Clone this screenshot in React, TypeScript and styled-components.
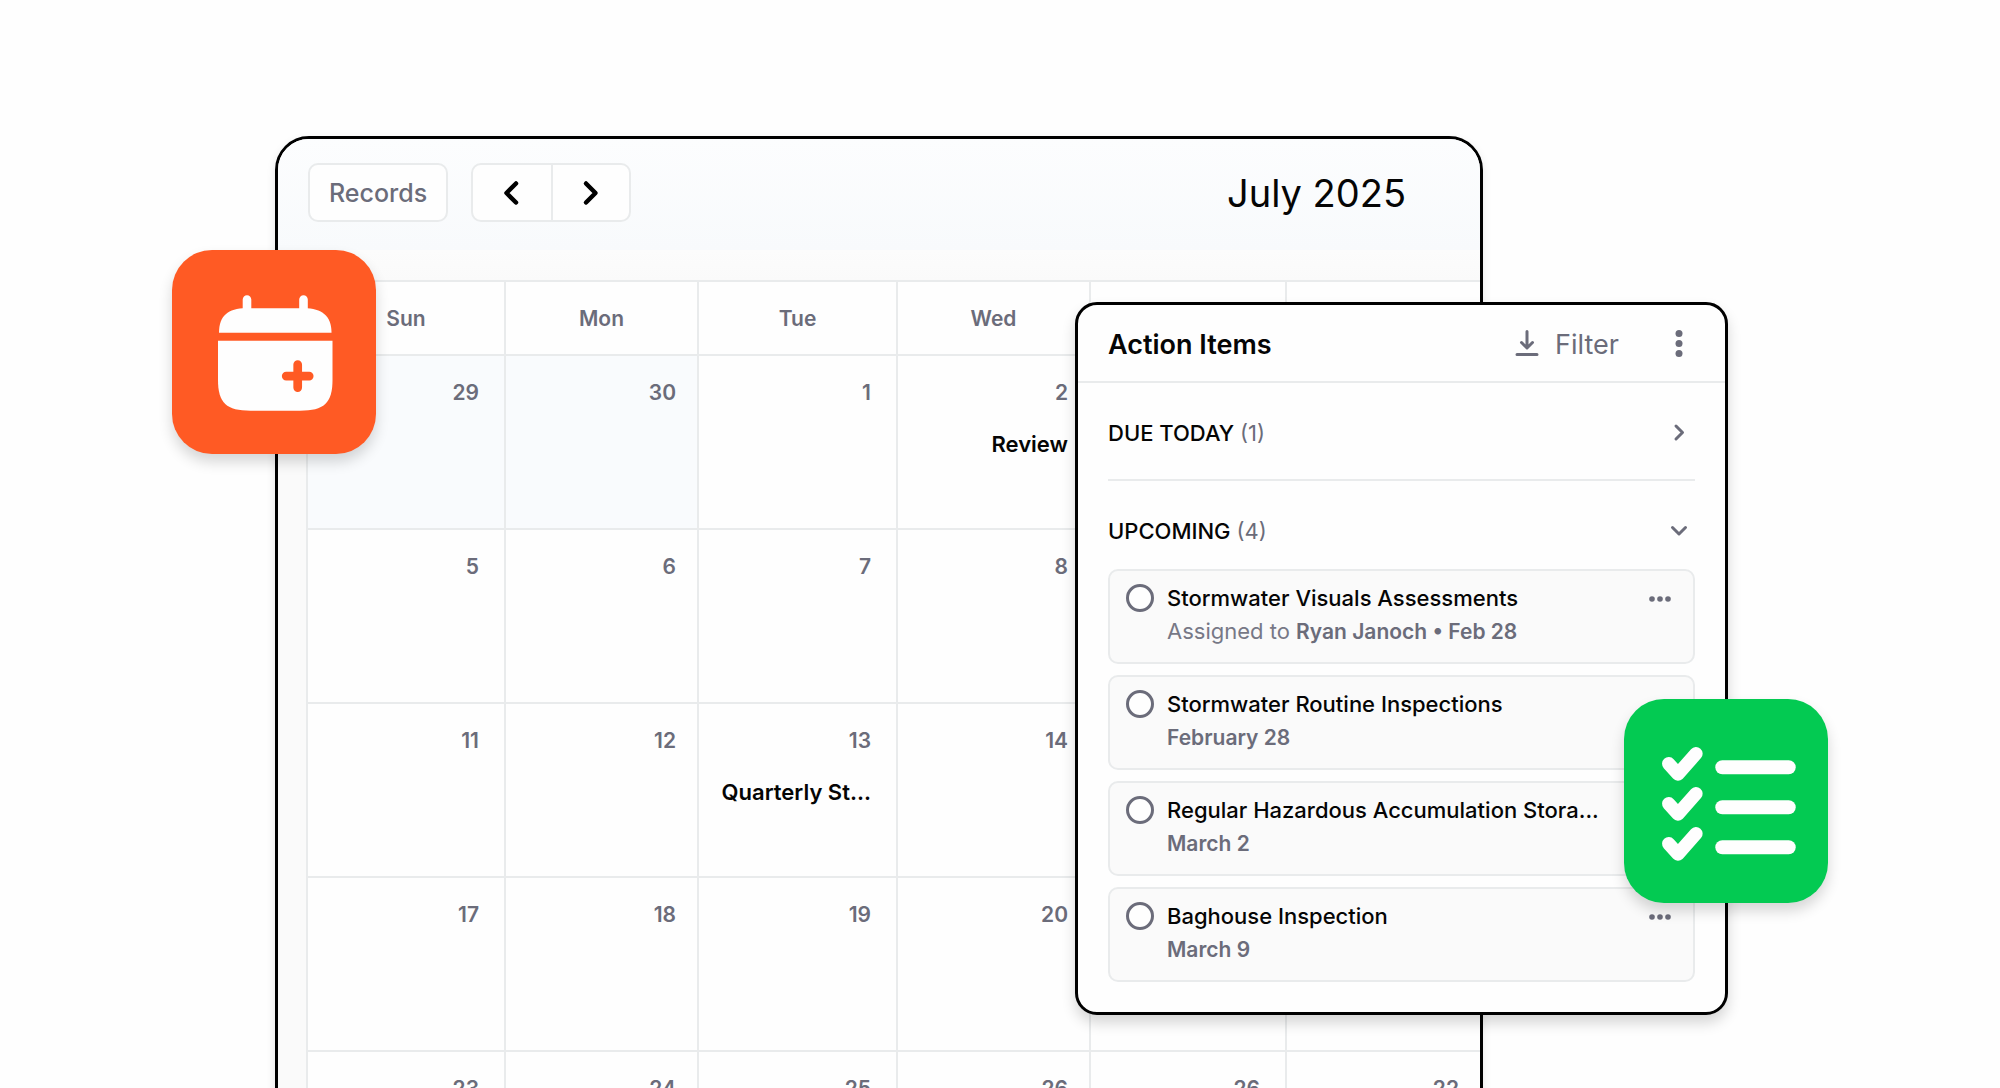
import React from "react";
import styled, { createGlobalStyle } from "styled-components";

const ink = "#050505";
const muted = "#6b6c7a";
const line = "#e9ebec";

const GlobalStyle = createGlobalStyle`
  *, *::before, *::after { box-sizing: border-box; }
  body { margin: 0; background: #fefefe; }
  body, button, input, table { font-family: Inter, "Liberation Sans", sans-serif; }
  h1, h2, h3, p, ul { margin: 0; padding: 0; }
`;

const Stage = styled.main`
  height: 100vh;
  overflow: hidden;
  padding: 136px 172px 0;
  color: ${ink};
`;

const Scene = styled.div`
  position: relative;
  min-width: 1400px;
`;

/* Calendar window */

const CalendarWindow = styled.section`
  margin: 0 345px 0 103px;
  overflow: hidden;
  border: 3px solid #000;
  border-radius: 34px;
  background: #fafafa;
  box-shadow: 0 4px 10px rgba(0, 0, 0, 0.1);
`;

const Toolbar = styled.header`
  display: flex;
  align-items: center;
  gap: 23px;
  padding: 24px 74px 28px 30px;
  background: linear-gradient(#fcfdfe, #f8fafc);
`;

const ToolbarSpacer = styled.div`
  height: 30px;
  background: linear-gradient(#fcfcfc, #fafafa);
`;

const RecordsButton = styled.button`
  height: 59px;
  padding: 0 19px;
  border: 2px solid ${line};
  border-radius: 10px;
  background: #fefefe;
  color: ${muted};
  font-size: 25px;
  font-weight: 500;
`;

const Pager = styled.div`
  display: flex;
  height: 59px;
  border: 2px solid ${line};
  border-radius: 10px;
  background: #fefefe;
`;

const PagerButton = styled.button`
  display: flex;
  align-items: center;
  justify-content: center;
  width: 78px;
  padding: 0;
  border: 0;
  background: none;
  color: #000;
  & + & { border-left: 2px solid ${line}; }
`;

const MonthTitle = styled.h1`
  margin-left: auto;
  font-size: 38px;
  line-height: 48px;
  font-weight: 400;
`;

const GridWrap = styled.div`
  padding-left: 28px;
`;

const MonthTable = styled.table`
  width: 100%;
  table-layout: fixed;
  border-collapse: separate;
  border-spacing: 0;
  background: #fefefe;
`;

const Column = styled.col<{ $width: number }>`
  width: ${(p) => p.$width}px;
`;

const DayName = styled.th`
  height: 74px;
  padding: 0;
  border-top: 2px solid ${line};
  border-left: 2px solid ${line};
  color: ${muted};
  font-size: 21px;
  font-weight: 600;
`;

const DayCell = styled.td<{ $outside: boolean }>`
  height: 174px;
  padding: 23px 25px 0 0;
  border-top: 2px solid ${line};
  border-left: 2px solid ${line};
  background: ${(p) => (p.$outside ? "#f9fbfd" : "#fefefe")};
  color: ${muted};
  font-size: 21px;
  line-height: 28px;
  font-weight: 600;
  text-align: right;
  vertical-align: top;
  white-space: nowrap;
  &:nth-child(even) { padding-right: 21px; }
`;

const EventName = styled.p`
  padding-top: 23px;
  color: ${ink};
  font-size: 22px;
`;

/* Action items panel */

const Panel = styled.section`
  position: absolute;
  top: 166px;
  right: 100px;
  width: 653px;
  border: 3px solid #000;
  border-radius: 22px;
  background: #fefefe;
  box-shadow: 0 8px 14px rgba(0, 0, 0, 0.16);
`;

const PanelHeader = styled.header`
  display: flex;
  align-items: center;
  height: 78px;
  padding: 2px 30px 0;
  border-bottom: 2px solid ${line};
`;

const PanelTitle = styled.h2`
  flex: 1;
  font-size: 27px;
  font-weight: 600;
`;

const PlainButton = styled.button`
  display: flex;
  align-items: center;
  justify-content: center;
  gap: 16px;
  min-width: 32px;
  padding: 0;
  border: 0;
  background: none;
  color: ${muted};
  font-size: 27px;
`;

const FilterButton = styled(PlainButton)`
  margin-right: 44px;
`;

const PanelBody = styled.div`
  padding: 0 30px 30px;
`;

const SectionHeader = styled.div<{ $divided?: boolean }>`
  display: flex;
  align-items: center;
  justify-content: space-between;
  height: ${(p) => (p.$divided ? 98 : 88)}px;
  padding-bottom: ${(p) => (p.$divided ? 0 : 12)}px;
  padding-top: ${(p) => (p.$divided ? 4 : 24)}px;
  border-bottom: ${(p) => (p.$divided ? "2px solid " + line : "0")};
`;

const SectionTitle = styled.h3`
  font-size: 22px;
  line-height: 28px;
  font-weight: 500;
`;

const Count = styled.span`
  color: ${muted};
  font-weight: 400;
`;

const TaskList = styled.ul`
  display: grid;
  gap: 11px;
  list-style: none;
`;

const TaskCard = styled.li`
  display: flex;
  align-items: flex-start;
  gap: 13px;
  height: 95px;
  padding: 11px 16px;
  border: 2px solid ${line};
  border-radius: 10px;
  background: #fafafa;
`;

const TaskCheck = styled.input`
  appearance: none;
  flex: none;
  width: 28px;
  height: 28px;
  margin: 2px 0 0;
  border: 3px solid ${muted};
  border-radius: 50%;
  background: #fefefe;
`;

const TaskText = styled.div`
  flex: 1;
`;

const TaskName = styled.label`
  display: block;
  font-size: 22px;
  line-height: 33px;
  font-weight: 500;
  white-space: nowrap;
`;

const TaskMeta = styled.p`
  color: ${muted};
  font-size: 21px;
  line-height: 33px;
  font-weight: 600;
`;

const TaskMenu = styled(PlainButton)`
  height: 33px;
  min-width: 34px;
`;

/* App tiles */

const Tile = styled.div<{ $color: string; $side: "left" | "right"; $top: number }>`
  position: absolute;
  top: ${(p) => p.$top}px;
  ${(p) => p.$side}: 0;
  width: 204px;
  height: 204px;
  border-radius: 40px;
  background: ${(p) => p.$color};
  box-shadow: 0 8px 14px rgba(0, 0, 0, 0.16);
  svg { display: block; }
`;

const Chevron = ({ d, size, stroke }: { d: string; size: number; stroke: number }) => (
  <svg width={size} height={size} viewBox={`0 0 ${size} ${size}`} fill="none" stroke="currentColor"
    strokeWidth={stroke} strokeLinecap="round" strokeLinejoin="round" aria-hidden="true">
    <path d={d} />
  </svg>
);

const columns = [198, 193, 199, 193, 196, 195];
const dayNames = ["Sun", "Mon", "Tue", "Wed", "", ""];

type Day = { n?: string; event?: string; outside?: boolean };

const weeks: Day[][] = [
  [{ n: "29", outside: true }, { n: "30", outside: true }, { n: "1" }, { n: "2", event: "Review" }, {}, {}],
  [{ n: "5" }, { n: "6" }, { n: "7" }, { n: "8" }, {}, {}],
  [{ n: "11" }, { n: "12" }, { n: "13", event: "Quarterly St..." }, { n: "14" }, {}, {}],
  [{ n: "17" }, { n: "18" }, { n: "19" }, { n: "20" }, {}, {}],
  [{ n: "23" }, { n: "24" }, { n: "25" }, { n: "26" }, { n: "26" }, { n: "22" }],
];

const tasks = [
  { name: "Stormwater Visuals Assessments", assignee: "Ryan Janoch", date: "Feb 28" },
  { name: "Stormwater Routine Inspections", date: "February 28" },
  { name: "Regular Hazardous Accumulation Stora...", date: "March 2" },
  { name: "Baghouse Inspection", date: "March 9" },
];

const Assigned = styled.span`
  color: #777886;
  font-size: 22px;
  font-weight: 400;
`;

export default function App() {
  return (
    <>
      <GlobalStyle />
      <Stage>
        <Scene>
          <CalendarWindow>
            <Toolbar>
              <RecordsButton type="button">Records</RecordsButton>
              <Pager>
                <PagerButton type="button" aria-label="Previous month">
                  <Chevron d="M18 4.500 L8.500 14 L18 23.500" size={28} stroke={4.5} />
                </PagerButton>
                <PagerButton type="button" aria-label="Next month">
                  <Chevron d="M9 4.500 L18.500 14 L9 23.500" size={28} stroke={4.5} />
                </PagerButton>
              </Pager>
              <MonthTitle>July 2025</MonthTitle>
            </Toolbar>
            <ToolbarSpacer />
            <GridWrap>
              <MonthTable>
                <colgroup>
                  {columns.map((w, i) => (
                    <Column key={i} $width={w} />
                  ))}
                </colgroup>
                <thead>
                  <tr>
                    {dayNames.map((d, i) => (
                      <DayName key={i} scope="col">{d}</DayName>
                    ))}
                  </tr>
                </thead>
                <tbody>
                  {weeks.map((week, w) => (
                    <tr key={w}>
                      {week.map((day, d) => (
                        <DayCell key={d} $outside={!!day.outside}>
                          {day.n}
                          {day.event && <EventName>{day.event}</EventName>}
                        </DayCell>
                      ))}
                    </tr>
                  ))}
                </tbody>
              </MonthTable>
            </GridWrap>
          </CalendarWindow>

          <Panel>
            <PanelHeader>
              <PanelTitle>Action Items</PanelTitle>
              <FilterButton type="button">
                <svg width="24" height="28" viewBox="0 0 24 28" fill="none" stroke="currentColor" strokeWidth="3"
                  strokeLinecap="round" strokeLinejoin="round" aria-hidden="true">
                  <path d="M12 1.500V17M6.500 12.500L12 18L17.500 12.500M2 24.500H22" />
                </svg>
                Filter
              </FilterButton>
              <PlainButton type="button" aria-label="More options">
                <svg width="8" height="28" viewBox="0 0 8 28" fill="currentColor" aria-hidden="true">
                  <circle cx="4" cy="3.500" r="3.500" />
                  <circle cx="4" cy="13.500" r="3.500" />
                  <circle cx="4" cy="23.500" r="3.500" />
                </svg>
              </PlainButton>
            </PanelHeader>
            <PanelBody>
              <SectionHeader $divided>
                <SectionTitle>DUE TODAY <Count>(1)</Count></SectionTitle>
                <PlainButton type="button" aria-label="Expand due today">
                  <Chevron d="M8 4 L14.500 10.500 L8 17" size={22} stroke={3} />
                </PlainButton>
              </SectionHeader>
              <SectionHeader>
                <SectionTitle>UPCOMING <Count>(4)</Count></SectionTitle>
                <PlainButton type="button" aria-label="Collapse upcoming">
                  <Chevron d="M4.500 7.500 L11 14 L17.500 7.500" size={22} stroke={3} />
                </PlainButton>
              </SectionHeader>
              <TaskList>
                {tasks.map((t, i) => (
                  <TaskCard key={t.name}>
                    <TaskCheck type="checkbox" id={`task-${i}`} />
                    <TaskText>
                      <TaskName htmlFor={`task-${i}`}>{t.name}</TaskName>
                      <TaskMeta>
                        {t.assignee && (
                          <>
                            <Assigned>Assigned to </Assigned>
                            {t.assignee} •{" "}
                          </>
                        )}
                        {t.date}
                      </TaskMeta>
                    </TaskText>
                    <TaskMenu type="button" aria-label={`Options for ${t.name}`}>
                      <svg width="24" height="8" viewBox="0 0 24 8" fill="currentColor" aria-hidden="true">
                        <circle cx="4" cy="4" r="2.800" />
                        <circle cx="12" cy="4" r="2.800" />
                        <circle cx="20" cy="4" r="2.800" />
                      </svg>
                    </TaskMenu>
                  </TaskCard>
                ))}
              </TaskList>
            </PanelBody>
          </Panel>

          <Tile $color="#ff5a24" $side="left" $top={114}>
            <svg width="204" height="204" viewBox="0 0 204 204" fill="#fefefe" aria-hidden="true">
              <path d="M75 49.5V62M131.5 49.5V62" stroke="#fefefe" strokeWidth="8.6" strokeLinecap="round" />
              <path d="M47 82.7C47 66 56 58.3 74 58.3H132C150 58.3 159.5 66 159.5 82.7Z" />
              <path d="M46 90.7H160.5V130C160.5 153 152 160.7 128 160.7H78.500C54.500 160.7 46 153 46 130Z" />
              <path d="M125.700 114.600V137.600M114.200 126.100H137.200" stroke="#ff5a24" strokeWidth="8.700" strokeLinecap="round" />
            </svg>
          </Tile>

          <Tile $color="#03ca52" $side="right" $top={563}>
            <svg width="204" height="204" viewBox="0 0 204 204" fill="none" stroke="#fefefe" strokeLinecap="round"
              strokeLinejoin="round" aria-hidden="true">
              {[0, 40, 80].map((y) => (
                <g key={y} transform={`translate(0 ${y})`}>
                  <path d="M44.700 64.700L54 75L72 54.700" strokeWidth="13.300" />
                  <path d="M98.300 68.300H164.700" strokeWidth="14" />
                </g>
              ))}
            </svg>
          </Tile>
        </Scene>
      </Stage>
    </>
  );
}
